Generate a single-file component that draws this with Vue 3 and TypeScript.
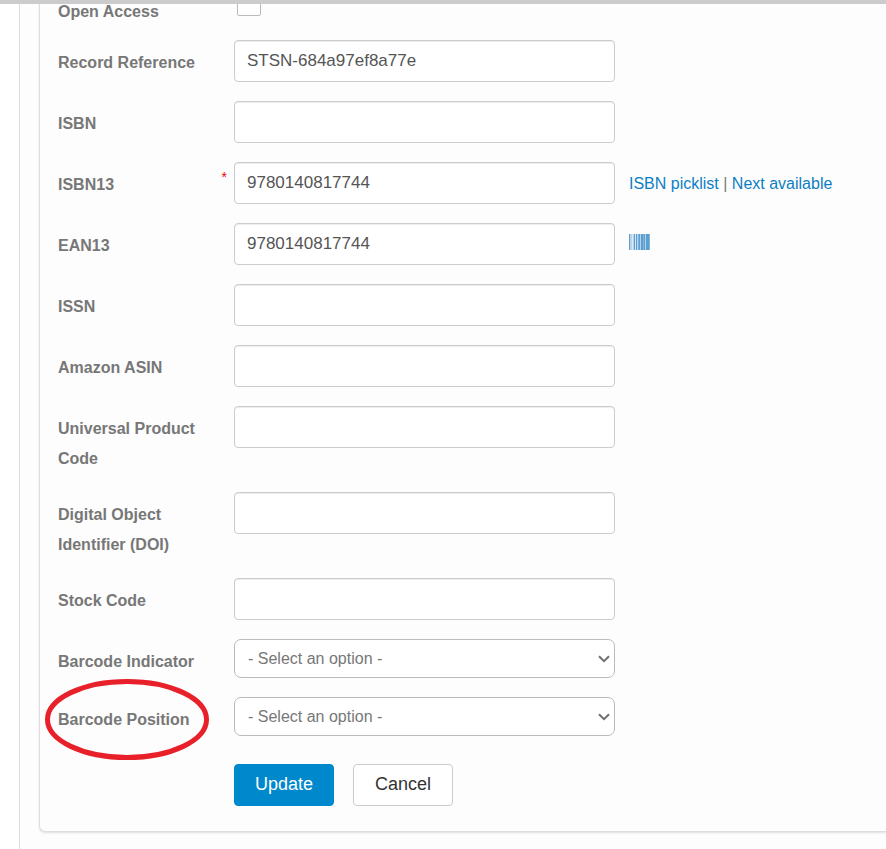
<script setup lang="ts">
import { reactive } from 'vue'

interface Field {
  id: string
  label: string
  kind: 'checkbox' | 'text' | 'select'
  required?: boolean
  extra?: 'links' | 'barcode'
  circled?: boolean
}

const fields: Field[] = [
  { id: 'open-access', label: 'Open Access', kind: 'checkbox' },
  { id: 'record-reference', label: 'Record Reference', kind: 'text' },
  { id: 'isbn', label: 'ISBN', kind: 'text' },
  { id: 'isbn13', label: 'ISBN13', kind: 'text', required: true, extra: 'links' },
  { id: 'ean13', label: 'EAN13', kind: 'text', extra: 'barcode' },
  { id: 'issn', label: 'ISSN', kind: 'text' },
  { id: 'asin', label: 'Amazon ASIN', kind: 'text' },
  { id: 'upc', label: 'Universal Product Code', kind: 'text' },
  { id: 'doi', label: 'Digital Object Identifier (DOI)', kind: 'text' },
  { id: 'stock-code', label: 'Stock Code', kind: 'text' },
  { id: 'barcode-indicator', label: 'Barcode Indicator', kind: 'select' },
  { id: 'barcode-position', label: 'Barcode Position', kind: 'select', circled: true },
]

const values = reactive<Record<string, string>>({
  'record-reference': 'STSN-684a97ef8a77e',
  isbn13: '9780140817744',
  ean13: '9780140817744',
  'barcode-indicator': '',
  'barcode-position': '',
})
</script>

<template>
  <div class="page">
    <div class="topbar"></div>
    <main class="outer">
      <form class="panel" @submit.prevent>
        <div v-for="f in fields" :key="f.id" class="row" :class="f.kind">
          <div class="label-cell">
            <label :for="f.id">{{ f.label }}</label>
            <svg v-if="f.circled" class="ring" viewBox="0 0 164 81" aria-hidden="true">
              <ellipse cx="82" cy="40.5" rx="79.5" ry="38" />
            </svg>
          </div>
          <span class="marker">{{ f.required ? '*' : '' }}</span>
          <div class="field">
            <input v-if="f.kind === 'checkbox'" :id="f.id" class="tick" type="checkbox" />
            <input v-else-if="f.kind === 'text'" :id="f.id" v-model="values[f.id]" class="control" type="text" :required="f.required" />
            <template v-else>
              <select :id="f.id" v-model="values[f.id]" class="control">
                <option value="">- Select an option -</option>
              </select>
              <svg class="chevron" viewBox="0 0 12 8" aria-hidden="true"><path d="M1 1.2 6 6.2 11 1.2" /></svg>
            </template>
          </div>
          <div v-if="f.extra === 'links'" class="extra">
            <a href="#">ISBN picklist</a> | <a href="#">Next available</a>
          </div>
          <div v-else-if="f.extra === 'barcode'" class="extra">
            <a href="#" class="barcode" aria-label="Barcode">
              <svg viewBox="0 0 21 16" aria-hidden="true">
                <path fill="#b9d3ea" d="M0 0h21v16H0z" />
                <path fill="#5b9fd0" d="M0 0h1v16H0zM5 0h1v16H5zM7 0h1v16H7zM10 0h1v16h-1zM12 0h2v16h-2zM15 0h1v16h-1zM17 0h3v16h-3z" />
                <path fill="#dce8f5" d="M3 0h1v16H3zM6 0h1v16H6z" />
                <path fill="#7fb5de" d="M9 0h1v16H9zM14 0h1v16h-1zM20 0h1v16h-1z" />
              </svg>
            </a>
          </div>
        </div>
        <div class="actions">
          <button type="submit" class="primary">Update</button>
          <button type="button">Cancel</button>
        </div>
      </form>
    </main>
  </div>
</template>

<style>
body {
  margin: 0;
  background: #fff;
}
</style>

<style scoped>
.page {
  box-sizing: border-box;
  height: 100vh;
  overflow: hidden;
  display: flex;
  flex-direction: column;
  font-family: "Liberation Sans", Arial, sans-serif;
  font-size: 16px;
  line-height: 30px;
  color: #777;
}
.topbar {
  flex: none;
  height: 4px;
  background: #ccc;
  position: relative;
  z-index: 1;
}
.outer {
  flex: 1;
  margin-left: 19px;
  padding-left: 19px;
  border-left: 1px solid #ddd;
  background: #fdfdfd;
}
.panel {
  margin-top: -15px;
  padding: 0 0 25px 18px;
  display: flex;
  flex-direction: column;
  gap: 19px;
  border: 1px solid #ddd;
  border-width: 0 0 1px 1px;
  border-bottom-left-radius: 6px;
  box-shadow: 0 1px 2px rgba(0, 0, 0, 0.12);
}
.row {
  display: grid;
  grid-template-columns: 156px 20px minmax(0, 381px) auto;
  justify-content: start;
  align-items: start;
}
.row.checkbox {
  height: 32px;
}
.label-cell {
  position: relative;
  margin-bottom: -1px;
  padding-top: 8px;
  padding-right: 12px;
  font-weight: bold;
}
.row.select .label-cell {
  height: 32px;
}
.label-cell label {
  display: block;
}
.ring {
  position: absolute;
  left: -13px;
  top: -18px;
  width: 164px;
  height: 81px;
  fill: none;
  stroke: #e8202a;
  stroke-width: 5;
}
.marker {
  padding: 0 7px;
  text-align: right;
  font-size: 14px;
  color: #f00;
}
.field {
  position: relative;
  display: flex;
}
.control {
  box-sizing: border-box;
  width: 100%;
  height: 42px;
  margin: 0;
  padding: 0 12px;
  border: 1px solid #ccc;
  border-radius: 4px;
  background: #fff;
  box-shadow: inset 0 1px 1px rgba(0, 0, 0, 0.075);
  font-family: inherit;
  font-size: 17px;
  color: #555;
}
select.control {
  appearance: none;
  height: 39px;
  padding: 0 32px 0 13px;
  border-color: #bbb;
  border-radius: 7px;
  box-shadow: none;
  font-size: 16px;
  color: #777;
}
.chevron {
  position: absolute;
  right: 5px;
  top: 16px;
  width: 12px;
  height: 8px;
  fill: none;
  stroke: #707070;
  stroke-width: 2;
  pointer-events: none;
}
.tick {
  appearance: none;
  box-sizing: border-box;
  width: 24px;
  height: 24px;
  margin: 3px 0 0 3px;
  border: 1px solid #bbb;
  border-radius: 2px;
  background: #fff;
}
.extra {
  padding: 7px 0 0 14px;
  white-space: nowrap;
}
a {
  color: #0c7fc4;
  text-decoration: none;
}
.barcode {
  display: block;
  padding-top: 4px;
}
.barcode svg {
  display: block;
  width: 21px;
  height: 16px;
}
.actions {
  display: flex;
  gap: 19px;
  padding: 9px 0 0 176px;
}
button {
  box-sizing: border-box;
  width: 100px;
  height: 42px;
  padding: 0 0 2px;
  border: 1px solid #ccc;
  border-radius: 4px;
  background: #fff;
  font-family: inherit;
  font-size: 18px;
  color: #333;
}
button.primary {
  border-color: #0088cc;
  background: #0088cc;
  color: #fff;
}
</style>
